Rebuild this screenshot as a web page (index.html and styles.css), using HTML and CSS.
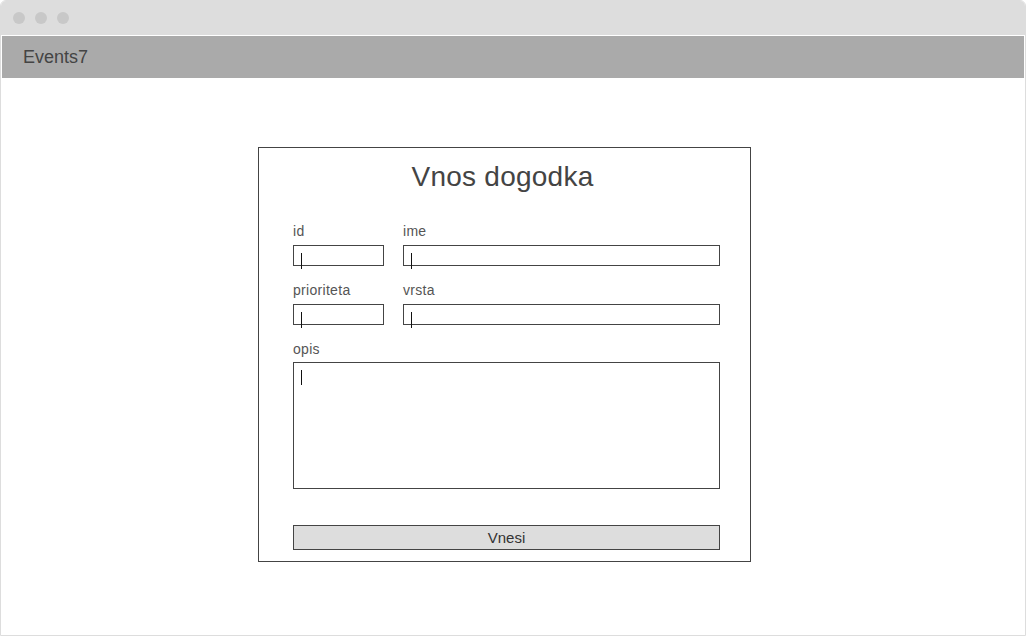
FILE: index.html
```html
<!DOCTYPE html>
<html>
<head>
<meta charset="utf-8">
<link rel="stylesheet" href="styles.css">
</head>
<body>
<div class="window">
  <div class="titlebar">
    <span class="dot"></span><span class="dot"></span><span class="dot"></span>
  </div>
  <div class="content">
    <div class="header">Events7</div>
    <main class="main">
      <form class="form">
        <h1 class="title">Vnos dogodka</h1>
        <div class="fields">
          <div class="field">
            <label class="label">id</label>
            <div class="input"><span class="caret"></span></div>
          </div>
          <div class="field">
            <label class="label">ime</label>
            <div class="input"><span class="caret"></span></div>
          </div>
          <div class="field">
            <label class="label">prioriteta</label>
            <div class="input"><span class="caret"></span></div>
          </div>
          <div class="field">
            <label class="label">vrsta</label>
            <div class="input"><span class="caret"></span></div>
          </div>
          <div class="field wide">
            <label class="label">opis</label>
            <div class="textarea"><span class="caret caret-ta"></span></div>
          </div>
        </div>
        <div class="button">Vnesi</div>
      </form>
    </main>
  </div>
</div>
</body>
</html>
```

FILE: styles.css
```css
* { box-sizing: border-box; }
html, body { margin: 0; padding: 0; background: #fff; }
body { font-family: "Liberation Sans", Arial, sans-serif; color: #444; }

.window {
  width: 1026px;
  height: 636px;
  border: 1px solid #ddd;
  border-radius: 6px 6px 0 0;
  display: flex;
  flex-direction: column;
  overflow: hidden;
}
.titlebar {
  height: 34px;
  background: #ddd;
  display: flex;
  align-items: center;
  gap: 10px;
  padding-left: 12px;
  flex: none;
}
.dot {
  width: 12px;
  height: 12px;
  border-radius: 50%;
  background: #c8c8c8;
}
.content {
  flex: 1;
  padding: 1px;
  background: #fff;
}
.header {
  height: 42px;
  line-height: 42px;
  background: #aaa;
  font-size: 18px;
  color: #444;
  padding-left: 21px;
}
.main {
  padding: 69px 0 0 256px;
}
.form {
  width: 493px;
  border: 1px solid #444;
  padding: 13px 30px 11px 34px;
  margin: 0;
}
.title {
  margin: 0;
  padding-right: 8px;
  font-weight: normal;
  font-size: 28px;
  line-height: 32px;
  letter-spacing: 0.25px;
  text-align: center;
  color: #444;
}
.fields {
  margin-top: 30px;
  display: grid;
  grid-template-columns: 91px 1fr;
  column-gap: 19px;
  row-gap: 16px;
}
.field {
  display: flex;
  flex-direction: column;
  gap: 6px;
}
.field.wide {
  grid-column: 1 / 3;
  gap: 5px;
}
.label {
  font-size: 14px;
  line-height: 16px;
  letter-spacing: 0.3px;
  color: #555;
}
.input {
  position: relative;
  height: 21px;
  border: 1px solid #444;
  background: #fff;
}
.textarea {
  position: relative;
  height: 127px;
  border: 1px solid #444;
  background: #fff;
}
.caret {
  position: absolute;
  left: 7px;
  top: 7px;
  width: 1px;
  height: 16px;
  background: #111;
}
.caret-ta {
  height: 15px;
}
.button {
  margin-top: 36px;
  height: 25px;
  line-height: 23px;
  border: 1px solid #444;
  background: #ddd;
  text-align: center;
  font-size: 15px;
  color: #333;
}
```
